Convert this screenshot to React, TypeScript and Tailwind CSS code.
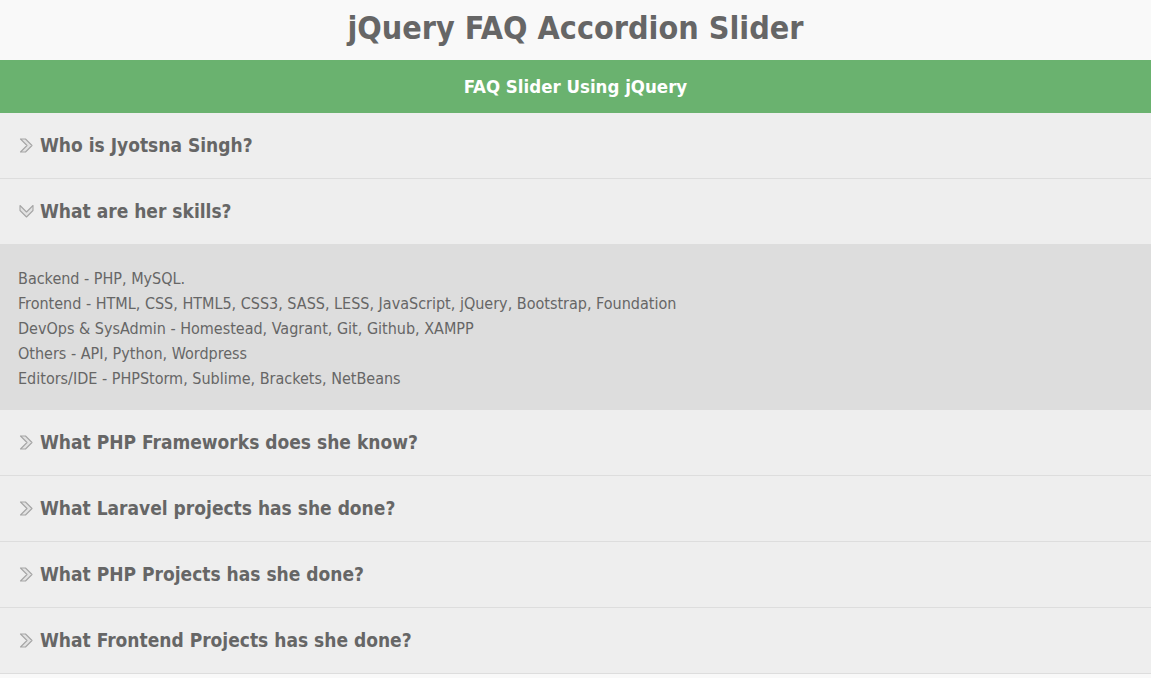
import React from "react";

const Chevron = ({ open }: { open?: boolean }) => (
  <svg width="15" height="15" viewBox="0 0 15 15" className="shrink-0" style={{ transform: open ? "rotate(90deg)" : undefined }}>
    <path d="M1.5 1 L6.5 1 L13 7.5 L6.5 14 L1.5 14 L8 7.5 Z" fill="#e2e2e2" stroke="#a5a5a5" strokeWidth="1.1" strokeLinejoin="round" />
  </svg>
);

const items = [
  { q: "Who is Jyotsna Singh?" },
  {
    q: "What are her skills?",
    open: true,
    a: [
      "Backend - PHP, MySQL.",
      "Frontend - HTML, CSS, HTML5, CSS3, SASS, LESS, JavaScript, jQuery, Bootstrap, Foundation",
      "DevOps & SysAdmin - Homestead, Vagrant, Git, Github, XAMPP",
      "Others - API, Python, Wordpress",
      "Editors/IDE - PHPStorm, Sublime, Brackets, NetBeans",
    ],
  },
  { q: "What PHP Frameworks does she know?" },
  { q: "What Laravel projects has she done?" },
  { q: "What PHP Projects has she done?" },
  { q: "What Frontend Projects has she done?" },
];

const cond = { fontFamily: "'DejaVu Sans Condensed', 'DejaVu Sans', Verdana, sans-serif" };

export default function App() {
  return (
    <div className="min-h-[678px] bg-[#f9f9f9] text-[#666666]" style={cond}>
      <h1 className="h-[60px] flex items-center justify-center pb-[4px] text-[32px] font-bold text-[#666666]">jQuery FAQ Accordion Slider</h1>
      <div className="h-[53px] bg-[#6ab26f] flex items-center justify-center text-white font-bold text-[18.5px]">FAQ Slider Using jQuery</div>
      <div>
        {items.map((it, i) => (
          <div key={i}>
            <div className="h-[66px] bg-[#eeeeee] border-b border-[#dddddd] flex items-center gap-[6px] pl-[19px]">
              <Chevron open={it.open} />
              <span className="font-bold text-[19px] text-[#666666]">{it.q}</span>
            </div>
            {it.a && (
              <div className="bg-[#dddddd] px-[18px] pt-[22px] pb-[19px] -mt-px">
                {it.a.map((l, j) => (
                  <div key={j} className="text-[16px] leading-[25px] text-[#666666]">{l}</div>
                ))}
              </div>
            )}
          </div>
        ))}
      </div>
    </div>
  );
}
